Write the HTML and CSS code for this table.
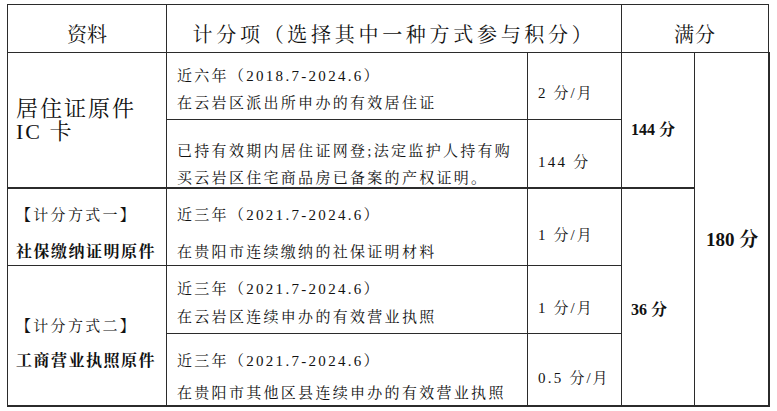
FILE: index.html
```html
<!DOCTYPE html>
<html lang="zh-CN">
<head>
<meta charset="utf-8">
<title>积分表</title>
<link rel="stylesheet" href="styles.css">
</head>
<body>
<div class="sheet">
<table class="score-table">
  <colgroup>
    <col class="c-doc"><col class="c-item"><col class="c-rate"><col class="c-sub"><col class="c-total">
  </colgroup>
  <thead>
    <tr class="r-head">
      <th class="h-doc">资料</th>
      <th colspan="2" class="h-item">计分项（选择其中一种方式参与积分）</th>
      <th colspan="2" class="h-total">满分</th>
    </tr>
  </thead>
  <tbody>
    <tr class="r1">
      <td rowspan="2" class="doc doc-big">居住证原件<br>IC 卡</td>
      <td class="item p1"><div class="ln">近六年（<span class="num">2018.7-2024.6</span>）</div><div class="ln">在云岩区派出所申办的有效居住证</div></td>
      <td class="rate rate-first"><span class="num">2</span> 分/月</td>
      <td rowspan="2" class="sub sub-a">144 分</td>
      <td rowspan="5" class="total">180 分</td>
    </tr>
    <tr class="r2">
      <td class="item p2"><div class="ln">已持有效期内居住证网登;法定监护人持有购</div><div class="ln">买云岩区住宅商品房已备案的产权证明。</div></td>
      <td class="rate"><span class="num">144</span> 分</td>
    </tr>
    <tr class="r3">
      <td class="doc p3"><div class="ln">【计分方式一】</div><div class="ln strong">社保缴纳证明原件</div></td>
      <td class="item p3"><div class="ln">近三年（<span class="num">2021.7-2024.6</span>）</div><div class="ln">在贵阳市连续缴纳的社保证明材料</div></td>
      <td class="rate"><span class="num">1</span> 分/月</td>
      <td rowspan="3" class="sub sub-b">36 分</td>
    </tr>
    <tr class="r4">
      <td rowspan="2" class="doc doc-mid"><div class="ln">【计分方式二】</div><div class="ln strong">工商营业执照原件</div></td>
      <td class="item p4"><div class="ln">近三年（<span class="num">2021.7-2024.6</span>）</div><div class="ln">在云岩区连续申办的有效营业执照</div></td>
      <td class="rate"><span class="num">1</span> 分/月</td>
    </tr>
    <tr class="r5">
      <td class="item p5"><div class="ln">近三年（<span class="num">2021.7-2024.6</span>）</div><div class="ln">在贵阳市其他区县连续申办的有效营业执照</div></td>
      <td class="rate"><span class="num">0.5</span> 分/月</td>
    </tr>
  </tbody>
</table>
</div>
</body>
</html>
```

FILE: styles.css
```css
* { box-sizing: border-box; }
html, body { margin: 0; background: #fff; }
body {
  font-family: "Liberation Serif", "Noto Serif CJK SC", "Noto Sans CJK SC", serif;
  color: #111;
}
.sheet { padding: 4px 0 0 7px; }

.score-table {
  border-collapse: collapse;
  table-layout: fixed;
  width: 761px;
}
.score-table th,
.score-table td {
  border: 1px solid #2b2b2b;
  padding: 0;
}
.c-doc { width: 159px; }
.c-item { width: 361px; }
.c-rate { width: 94px; }
.c-sub { width: 73px; }
.c-total { width: 74px; }

.r-head { height: 48px; }
.r1 { height: 67px; }
.r2 { height: 68px; }
.r3 { height: 77px; }
.r4 { height: 68px; }
.r5 { height: 73px; }

.r3 > td { border-top-width: 2px; }
.score-table .total { border-right-width: 2px; }
.r5 > td, .score-table .doc-mid, .score-table .sub-b, .score-table .total { border-bottom-width: 2px; }

th {
  font-weight: normal;
  font-size: 20px;
  text-align: center;
  vertical-align: middle;
}
.score-table th { padding-top: 10px; }
.score-table .h-item { letter-spacing: 3.7px; }
.score-table .h-total { letter-spacing: 1px; }

.ln { line-height: 18px; white-space: nowrap; }
.item, .doc {
  font-size: 15px;
  letter-spacing: 2.3px;
  vertical-align: top;
}
.num { letter-spacing: 2.3px; }
.score-table .item { padding-left: 10px; }
.score-table .doc { padding-left: 8px; }
.strong { font-weight: bold; font-size: 16px; letter-spacing: 1.5px; }

.score-table .p1 { padding-top: 14px; }
.p1 .ln + .ln { margin-top: 9px; }
.score-table .p2 { padding-top: 22px; }
.p2 .ln + .ln { margin-top: 9px; }
.score-table .p3 { padding-top: 17px; }
.p3 .ln + .ln { margin-top: 19px; }
.score-table .p4 { padding-top: 14px; }
.p4 .ln + .ln { margin-top: 10px; }
.score-table .p5 { padding-top: 18px; }
.p5 .ln + .ln { margin-top: 14px; }

.score-table .doc-big {
  font-size: 22px;
  line-height: 23px;
  letter-spacing: 2px;
  vertical-align: middle;
}
.score-table .doc-mid { vertical-align: middle; padding-top: 16px; }
.doc-mid .ln + .ln { margin-top: 17px; }

.score-table .rate {
  font-size: 15px;
  letter-spacing: 2px;
  vertical-align: middle;
  padding: 14px 0 0 10px;
  white-space: nowrap;
}
.score-table .rate-first { padding-top: 10px; }
.score-table .sub,
.score-table .total {
  font-weight: bold;
  vertical-align: middle;
  white-space: nowrap;
}
.score-table .sub { font-size: 16px; padding-left: 9px; }
.score-table .sub-a { padding-top: 17px; }
.score-table .sub-b { padding-top: 22px; }
.score-table .total { font-size: 19px; padding: 17px 0 0 11px; }
```
